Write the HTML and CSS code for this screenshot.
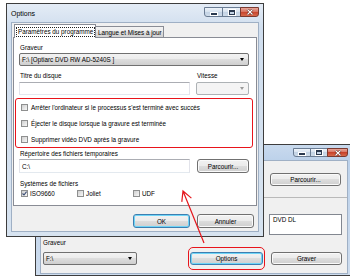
FILE: index.html
```html
<!DOCTYPE html>
<html>
<head>
  <title>Options</title>
  <link rel="stylesheet" href="styles.css">
</head>
<body>
  <div class="desktop">

    <!-- main burning window, mostly hidden behind the dialog -->
    <div class="window main-window">
      <div class="titlebar">
        <div class="controls">
          <span class="ctl ctl-min"><span class="glyph-min"></span></span>
          <span class="ctl ctl-max"><span class="glyph-max"></span></span>
          <span class="ctl ctl-close">
            <svg width="8" height="6" viewBox="0 0 8 6"><path d="M1.5 0.5 L6.5 5.5 M6.5 0.5 L1.5 5.5" stroke="#5a1a12" stroke-width="2.4"/><path d="M1.5 0.5 L6.5 5.5 M6.5 0.5 L1.5 5.5" stroke="#fff" stroke-width="1.2"/></svg>
          </span>
        </div>
      </div>
      <div class="client main-client">
        <div class="bw-row bw-browse"><button class="btn btn-wide">Parcourir...</button></div>
        <div class="bw-sep"></div>
        <div class="bw-row"><div class="listbox">DVD DL</div></div>
        <div class="label bw-label">Graveur</div>
        <div class="bw-bottom">
          <div class="select bw-select"><span>F:\</span><span class="caret"></span></div>
          <div class="ring"><button class="btn btn-options">Options</button></div>
          <button class="btn btn-burn">Graver</button>
        </div>
      </div>
    </div>

    <!-- options dialog -->
    <div class="window dialog">
      <div class="titlebar">
        <span class="title">Options</span>
        <div class="controls">
          <span class="ctl ctl-min"><span class="glyph-min"></span></span>
          <span class="ctl ctl-max"><span class="glyph-max"></span></span>
          <span class="ctl ctl-close">
            <svg width="8" height="6" viewBox="0 0 8 6"><path d="M1.5 0.5 L6.5 5.5 M6.5 0.5 L1.5 5.5" stroke="#5a1a12" stroke-width="2.4"/><path d="M1.5 0.5 L6.5 5.5 M6.5 0.5 L1.5 5.5" stroke="#fff" stroke-width="1.2"/></svg>
          </span>
        </div>
      </div>
      <div class="client dialog-client">
        <div class="tabs">
          <div class="tab active"><span class="focus">Paramètres du programme</span></div>
          <div class="tab">Langue et Mises à jour</div>
        </div>
        <div class="panel">
          <div class="label">Graveur</div>
          <div class="select main-select"><span>F:\ [Optiarc DVD RW AD-5240S ]</span><span class="caret"></span></div>

          <div class="field-row labels-row">
            <div class="label">Titre du disque</div>
            <div class="label">Vitesse</div>
          </div>
          <div class="field-row">
            <div class="input"></div>
            <div class="select disabled"><span class="caret"></span></div>
          </div>

          <div class="notice">
            <div class="check-row"><span class="box"></span>Arrêter l'ordinateur si le processus s'est terminé avec succès</div>
            <div class="check-row"><span class="box"></span>Éjecter le disque lorsque la gravure est terminée</div>
            <div class="check-row"><span class="box"></span>Supprimer vidéo DVD après la gravure</div>
          </div>

          <div class="label temp-label">Répertoire des fichiers temporaires</div>
          <div class="field-row temp-row">
            <div class="input">C:\</div>
            <button class="btn btn-browse">Parcourir...</button>
          </div>

          <div class="label fs-label">Systèmes de fichiers</div>
          <div class="fs-row">
            <div class="fs-item">
              <span class="box"><svg width="5" height="5" viewBox="0 0 5 5"><path d="M0.5 2.5 L2 4 L4.6 0.6" fill="none" stroke="#3b4d74" stroke-width="1.1"/></svg></span>ISO9660
            </div>
            <div class="fs-item"><span class="box"></span>Joliet</div>
            <div class="fs-item"><span class="box"></span>UDF</div>
          </div>
        </div>
        <div class="dialog-buttons">
          <button class="btn default">OK</button>
          <button class="btn">Annuler</button>
        </div>
      </div>
    </div>

    <!-- annotation arrow -->
    <svg class="note-arrow" width="350" height="276" viewBox="0 0 350 276">
      <path d="M204 243 L183 191 M181.8 201.9 L183 191 L191.4 198.1" fill="none" stroke="#e5161c" stroke-width="1.2"/>
    </svg>
  </div>
</body>
</html>
```

FILE: styles.css
```css
* {
  box-sizing: border-box;
}

body {
  margin: 0;
  width: 350px;
  height: 276px;
  overflow: hidden;
  background: #fff;
  font-family: "Liberation Sans", Arial, sans-serif;
  font-size: 6.3px;
  color: #000;
}

.desktop {
  position: relative;
  width: 350px;
  height: 276px;
}

/* window frames */
.window {
  position: absolute;
  display: flex;
  flex-direction: column;
  border: 1px solid #3d3d3d;
  background: linear-gradient(#e4ecf6, #d0deee 24px, #d7e3f0);
  padding: 0 4px 4px;
}

.main-window {
  left: 35px;
  top: 144px;
  width: 318px;
  height: 132px;
  padding-bottom: 1px;
  background: linear-gradient(#c9daee, #bcd1ea 16px, #cddcee);
}

.dialog {
  left: 6px;
  top: 3px;
  width: 258px;
  height: 234px;
}

.titlebar {
  height: 18px;
  display: flex;
  align-items: center;
  flex-shrink: 0;
}

.main-window .titlebar {
  height: 15px;
}

.title {
  font-size: 7px;
  padding-left: 0;
}

.controls {
  margin-left: auto;
  align-self: flex-start;
  margin-top: 3px;
  display: flex;
}

.ctl {
  width: 19px;
  height: 10px;
  border: 1px solid #6a7c93;
  background: linear-gradient(#eef3f9, #d6e2ef 50%, #c3d3e5 50%, #cfdcea);
  display: flex;
  align-items: center;
  justify-content: center;
  margin-left: -1px;
}

.ctl-min {
  border-bottom-left-radius: 3px;
}

.ctl-max {
  width: 19px;
}

.ctl-close {
  width: 19px;
  border-color: #7a3a30;
  border-bottom-right-radius: 3px;
  background: linear-gradient(#e8a598, #d6705e 50%, #c7432c 50%, #d86a4c);
}

.main-window .ctl {
  height: 9px;
  width: 18px;
}

.main-window .ctl-close {
  width: 21px;
}

.glyph-min {
  width: 6px;
  height: 2px;
  margin-top: 3px;
  background: #2b3a50;
  box-shadow: 0 0 0 1px #fff;
}

.glyph-max {
  width: 6px;
  height: 5px;
  border: 1px solid #2b3a50;
  border-top-width: 2px;
  box-shadow: 0 0 0 1px #fff;
}

.client {
  flex: 1;
  background: #f0f0f0;
  border: 1px solid #9fb0c5;
  display: flex;
  flex-direction: column;
}

.dialog-client {
  padding: 0 1px;
}

/* tabs */
.tabs {
  display: flex;
  align-items: flex-end;
  height: 14px;
  padding-left: 1px;
}

.tab {
  width: 68px;
  height: 11px;
  border: 1px solid #898c95;
  border-bottom: none;
  border-left: none;
  padding: 0 2px;
  background: linear-gradient(#f3f3f3, #ebebeb 50%, #dcdcdc 50%, #d4d4d4);
  display: flex;
  align-items: center;
  white-space: nowrap;
}

.tab.active {
  width: 82px;
  height: 14px;
  margin-bottom: -1px;
  border-left: 1px solid #898c95;
  background: #fff;
  position: relative;
  z-index: 1;
  padding: 0 1px;
}

.focus {
  border: 1px dotted #222;
  padding: 0 1px;
  line-height: 8px;
}

.panel {
  height: 169px;
  background: #fff;
  border: 1px solid #898c95;
  padding: 5px 7px 0 5px;
  display: flex;
  flex-direction: column;
}

.label {
  height: 9px;
  line-height: 9px;
  padding-left: 1px;
  white-space: nowrap;
}

/* combo boxes and inputs */
.select {
  height: 13px;
  border: 1px solid #707070;
  border-radius: 2px;
  background: linear-gradient(#f2f2f2, #ebebeb 50%, #dddddd 50%, #cfcfcf);
  display: flex;
  align-items: center;
  padding: 0 4px 0 2px;
  white-space: nowrap;
}

.main-select {
  margin-top: 1px;
}

.caret {
  margin-left: auto;
  width: 0;
  height: 0;
  border-left: 2.5px solid transparent;
  border-right: 2.5px solid transparent;
  border-top: 3px solid #000;
}

.select.disabled {
  border-color: #adb2b5;
  background: #f4f4f4;
}

.select.disabled .caret {
  border-top-color: #9a9a9a;
}

.input {
  height: 13px;
  border: 1px solid #abadb3;
  border-color: #abadb3 #e2e3ea #e3e9ef #e2e3ea;
  background: #fff;
  padding-left: 2px;
  display: flex;
  align-items: center;
}

.field-row {
  display: grid;
  grid-template-columns: 171px 53px;
  column-gap: 6px;
}

.labels-row {
  margin-top: 5px;
}

.labels-row + .field-row {
  margin-top: 2px;
}

/* checkboxes */
.notice {
  margin: 3px -4px 0 -4px;
  height: 50px;
  border: 1px solid #e8141b;
  border-radius: 3px;
  padding-left: 5px;
}

.check-row {
  height: 16px;
  display: flex;
  align-items: center;
  gap: 3px;
  white-space: nowrap;
}

.box {
  width: 7px;
  height: 7px;
  flex-shrink: 0;
  border: 1px solid #8e8f8f;
  background: linear-gradient(135deg, #cfcfcf, #f7f7f7);
  display: flex;
  align-items: center;
  justify-content: center;
}

.temp-label {
  margin-top: 1px;
}

.temp-row {
  margin-top: 1px;
}

.temp-row .input,
.temp-row .btn {
  height: 14px;
}

.fs-label {
  margin-top: 6px;
}

.fs-row {
  height: 10px;
  display: flex;
  padding-left: 2px;
}

.fs-item {
  width: 56px;
  display: flex;
  align-items: center;
  gap: 2px;
}

/* buttons */
.btn {
  font: inherit;
  color: #000;
  padding: 0;
  height: 14px;
  border: 1px solid #707070;
  border-radius: 3px;
  background: linear-gradient(#f2f2f2, #ebebeb 50%, #dddddd 50%, #cfcfcf);
  box-shadow: inset 0 0 0 1px #fafafa;
  white-space: nowrap;
}

.btn-browse {
  margin-left: 1px;
}

.btn.default {
  border-color: #3c7fb1;
  box-shadow: inset 0 0 0 1px #6fd5f7;
}

.dialog-buttons {
  display: flex;
  justify-content: flex-end;
  gap: 7px;
  margin-top: 8px;
  padding-right: 3px;
}

.dialog-buttons .btn {
  width: 57px;
}

/* main window contents */
.main-client {
  padding: 0 5px 0 2px;
}

.bw-row {
  display: flex;
  justify-content: flex-end;
}

.bw-browse {
  margin-top: 12px;
}

.btn-wide {
  width: 71px;
  height: 13px;
  margin-right: 1px;
}

.bw-sep {
  margin: 11px -5px 0 -2px;
  border-top: 1px solid #b9b9b9;
}

.listbox {
  margin-top: 16px;
  width: 73px;
  height: 21px;
  background: #fff;
  border: 1px solid #828790;
  padding: 1px 3px;
  line-height: 8px;
}

.bw-label {
  margin-top: 4px;
  height: 8px;
  line-height: 8px;
  padding-left: 0;
}

.bw-bottom {
  height: 23px;
  display: flex;
  align-items: center;
}

.bw-select {
  width: 94px;
}

.ring {
  margin-left: auto;
  border: 1px solid #e8141b;
  border-radius: 5px;
  padding: 4px 1px;
}

.btn-options {
  width: 73px;
  height: 13px;
  border-color: #3c7fb1;
  box-shadow: inset 0 0 0 1px #6fd5f7;
}

.btn-burn {
  width: 71px;
  height: 13px;
  margin-left: 6px;
}

/* annotation */
.note-arrow {
  position: absolute;
  left: 0;
  top: 0;
  pointer-events: none;
  z-index: 5;
}
```
